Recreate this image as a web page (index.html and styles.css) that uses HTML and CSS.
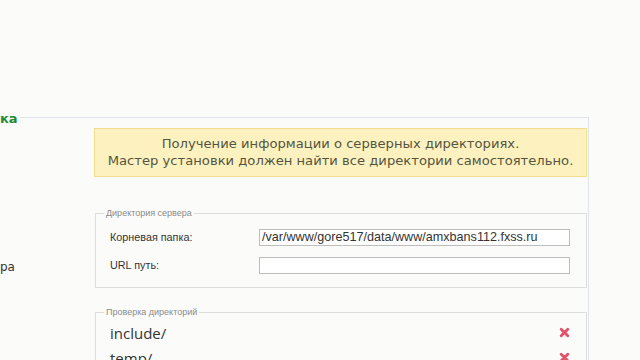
FILE: index.html
```html
<!DOCTYPE html>
<html lang="ru">
<head>
<meta charset="utf-8">
<title>Установка</title>
<link rel="stylesheet" href="styles.css">
</head>
<body>
<div class="page">
  <fieldset class="panel">
    <legend class="panel-title">ка</legend>
    <div class="panel-body">
      <aside class="sidebar">
        <div class="side-item">ра</div>
      </aside>
      <main class="content">
        <div class="notice">
          Получение информации о серверных директориях.<br>
          Мастер установки должен найти все директории самостоятельно.
        </div>
        <fieldset class="group group-server">
          <legend class="group-title">Директория сервера</legend>
          <div class="form-row first">
            <label class="form-label">Корневая папка:</label>
            <div class="form-input">/var/www/gore517/data/www/amxbans112.fxss.ru</div>
          </div>
          <div class="form-row">
            <label class="form-label">URL путь:</label>
            <div class="form-input"></div>
          </div>
        </fieldset>
        <fieldset class="group group-check">
          <legend class="group-title">Проверка директорий</legend>
          <div class="dir-row">
            <span class="dir-name">include/</span>
            <svg class="fail" viewBox="0 0 10 10" width="11" height="11"><path d="M2 2 L8 8 M8 2 L2 8" stroke="#e0536a" stroke-width="2.6" stroke-linecap="round" fill="none"/></svg>
          </div>
          <div class="dir-row">
            <span class="dir-name">temp/</span>
            <svg class="fail" viewBox="0 0 10 10" width="11" height="11"><path d="M2 2 L8 8 M8 2 L2 8" stroke="#e0536a" stroke-width="2.6" stroke-linecap="round" fill="none"/></svg>
          </div>
        </fieldset>
      </main>
    </div>
  </fieldset>
</div>
</body>
</html>
```
FILE: styles.css
```css
html, body {
  margin: 0;
  padding: 0;
  background: #fbfcfa;
  overflow: hidden;
  height: 360px;
}
body {
  font-family: "DejaVu Sans", Verdana, sans-serif;
  color: #333;
}
.page {
  padding-top: 110px;
}
.panel {
  margin: 0;
  width: 589px;
  box-sizing: border-box;
  padding: 0;
  border: none;
  border-top: 1px solid #dfe5ec;
  border-right: 1px solid #dfe5ec;
  min-width: 0;
}
.panel-title {
  padding: 0 2px 0 0;
  font-family: "DejaVu Sans", sans-serif;
  font-weight: bold;
  font-size: 13px;
  line-height: 14px;
  color: #1e8a35;
  position: relative;
  top: 2px;
}
.panel-body {
  display: flex;
  padding-top: 4px;
}
.sidebar {
  width: 94px;
  flex: none;
  padding-top: 132px;
}
.side-item {
  font-family: "DejaVu Sans", sans-serif;
  font-size: 12px;
  line-height: 14px;
  color: #333;
}
.content {
  flex: 1;
  min-width: 0;
  display: flex;
  flex-direction: column;
}
.notice {
  margin-right: 1px;
  background: #fdf2bf;
  border: 1px solid #f1dc8f;
  color: #55553f;
  font-size: 13.15px;
  line-height: 17px;
  text-align: center;
  padding: 6px 0 7px;
}
.group {
  margin: 0 1px 0 1px;
  border: 1px solid #dddddd;
  padding: 0 16px 0 14px;
  min-width: 0;
}
.group-server {
  margin-top: 31px;
  padding-bottom: 8px;
}
.group-check {
  margin-top: 19px;
  padding-top: 2px;
}
.group-title {
  margin-left: -6px;
  padding: 0 2px;
  font-family: "Liberation Sans", Arial, sans-serif;
  font-size: 9px;
  line-height: 11px;
  color: #8a8a8a;
}
.form-row {
  display: flex;
  align-items: center;
  height: 28px;
}
.form-row.first {
  margin-top: 4px;
}
.form-label {
  width: 149px;
  flex: none;
  font-family: "Liberation Sans", Arial, sans-serif;
  font-size: 10.8px;
  color: #333;
}
.form-input {
  flex: 1;
  height: 15px;
  border: 1px solid #bdbdbd;
  background: #fff;
  font-family: "Liberation Sans", Arial, sans-serif;
  font-size: 12.6px;
  line-height: 15px;
  padding: 0 2px;
  color: #333;
  white-space: nowrap;
  overflow: hidden;
}
.dir-row {
  display: flex;
  align-items: center;
  justify-content: space-between;
  height: 25px;
}
.dir-name {
  font-family: "Open Sans", sans-serif;
  font-size: 15px;
  color: #333;
}
.fail {
  margin-right: 0;
}
```
